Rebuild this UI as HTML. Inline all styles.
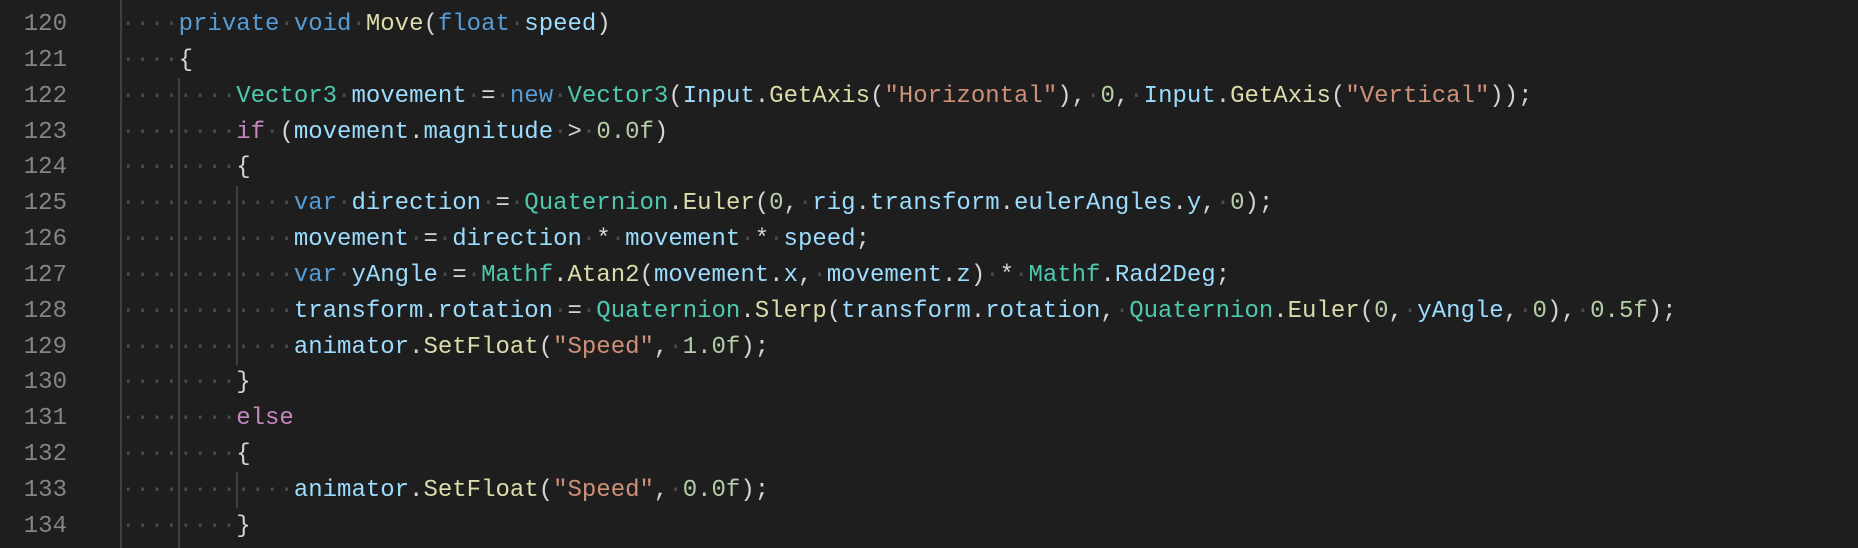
<!DOCTYPE html>
<html><head><meta charset="utf-8"><style>
html,body{margin:0;padding:0;background:#1e1e1e;width:1858px;height:548px;overflow:hidden}
body{position:relative;font-family:"DejaVu Sans Mono","Liberation Mono",monospace;}
.c{position:absolute;left:121px;top:7px;font-family:"Liberation Mono",monospace;font-size:24px;line-height:35.85px;color:#d4d4d4;white-space:pre}
.n{position:absolute;left:0;width:67px;top:7px;font-family:"Liberation Mono",monospace;font-size:24px;line-height:35.85px;color:#858585;text-align:right;white-space:pre}
i{font-style:normal;color:#4a4a4a}
.k{color:#569cd6}.f{color:#dcdcaa}.t{color:#4ec9b0}.v{color:#9cdcfe}.s{color:#ce9178}.m{color:#b5cea8}.p{color:#c586c0}
.g{position:absolute;width:2px;background:#404040}
</style></head><body>
<div class="g" style="left:120px;top:0;height:548px"></div>
<div class="g" style="left:178px;top:78px;height:470px"></div>
<div class="g" style="left:236px;top:186px;height:179px"></div>
<div class="g" style="left:236px;top:472px;height:36px"></div>
<div class="n">120
121
122
123
124
125
126
127
128
129
130
131
132
133
134</div>
<div class="c"><i>····</i><span class="k">private</span><i>·</i><span class="k">void</span><i>·</i><span class="f">Move</span>(<span class="k">float</span><i>·</i><span class="v">speed</span>)
<i>····</i>{
<i>········</i><span class="t">Vector3</span><i>·</i><span class="v">movement</span><i>·</i>=<i>·</i><span class="k">new</span><i>·</i><span class="t">Vector3</span>(<span class="v">Input</span>.<span class="f">GetAxis</span>(<span class="s">"Horizontal"</span>),<i>·</i><span class="m">0</span>,<i>·</i><span class="v">Input</span>.<span class="f">GetAxis</span>(<span class="s">"Vertical"</span>));
<i>········</i><span class="p">if</span><i>·</i>(<span class="v">movement</span>.<span class="v">magnitude</span><i>·</i>&gt;<i>·</i><span class="m">0.0f</span>)
<i>········</i>{
<i>············</i><span class="k">var</span><i>·</i><span class="v">direction</span><i>·</i>=<i>·</i><span class="t">Quaternion</span>.<span class="f">Euler</span>(<span class="m">0</span>,<i>·</i><span class="v">rig</span>.<span class="v">transform</span>.<span class="v">eulerAngles</span>.<span class="v">y</span>,<i>·</i><span class="m">0</span>);
<i>············</i><span class="v">movement</span><i>·</i>=<i>·</i><span class="v">direction</span><i>·</i>*<i>·</i><span class="v">movement</span><i>·</i>*<i>·</i><span class="v">speed</span>;
<i>············</i><span class="k">var</span><i>·</i><span class="v">yAngle</span><i>·</i>=<i>·</i><span class="t">Mathf</span>.<span class="f">Atan2</span>(<span class="v">movement</span>.<span class="v">x</span>,<i>·</i><span class="v">movement</span>.<span class="v">z</span>)<i>·</i>*<i>·</i><span class="t">Mathf</span>.<span class="v">Rad2Deg</span>;
<i>············</i><span class="v">transform</span>.<span class="v">rotation</span><i>·</i>=<i>·</i><span class="t">Quaternion</span>.<span class="f">Slerp</span>(<span class="v">transform</span>.<span class="v">rotation</span>,<i>·</i><span class="t">Quaternion</span>.<span class="f">Euler</span>(<span class="m">0</span>,<i>·</i><span class="v">yAngle</span>,<i>·</i><span class="m">0</span>),<i>·</i><span class="m">0.5f</span>);
<i>············</i><span class="v">animator</span>.<span class="f">SetFloat</span>(<span class="s">"Speed"</span>,<i>·</i><span class="m">1.0f</span>);
<i>········</i>}
<i>········</i><span class="p">else</span>
<i>········</i>{
<i>············</i><span class="v">animator</span>.<span class="f">SetFloat</span>(<span class="s">"Speed"</span>,<i>·</i><span class="m">0.0f</span>);
<i>········</i>}</div>
</body></html>
